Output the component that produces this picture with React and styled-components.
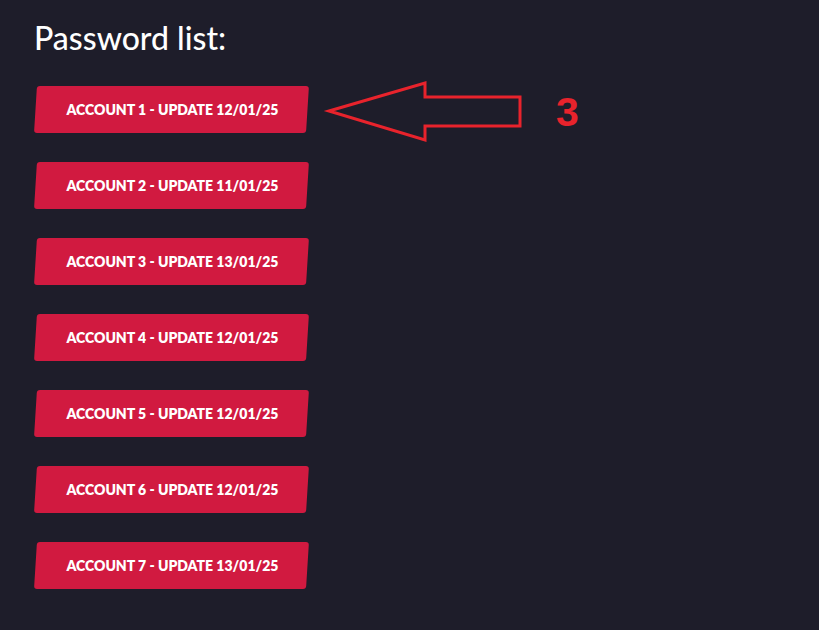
import React from "react";
import styled, { createGlobalStyle } from "styled-components";

const accounts = [
  { n: 1, date: "12/01/25" },
  { n: 2, date: "11/01/25" },
  { n: 3, date: "13/01/25" },
  { n: 4, date: "12/01/25" },
  { n: 5, date: "12/01/25" },
  { n: 6, date: "12/01/25" },
  { n: 7, date: "13/01/25" },
];

function App() {
  return (
    <>
      <GlobalStyle />
      <Page>
        <Title>Password list:</Title>
        <List>
          {accounts.map((a, i) => (
            <Row key={a.n}>
              <AccountButton>
                <span>
                  Account {a.n} - Update {a.date}
                </span>
              </AccountButton>
              {i === 0 && (
                <Callout>
                  <svg width="200" height="64" viewBox="0 0 200 64">
                    <polygon
                      points="3,33 99,5 99,19 194,19 194,48 99,48 99,62"
                      fill="none"
                      stroke="#e8232c"
                      strokeWidth="3"
                    />
                  </svg>
                  <Step>3</Step>
                </Callout>
              )}
            </Row>
          ))}
        </List>
      </Page>
    </>
  );
}

const GlobalStyle = createGlobalStyle`
  html, body {
    margin: 0;
    background: #1e1d2a;
  }
`;

const Page = styled.div`
  min-height: 630px;
  box-sizing: border-box;
  padding: 18px 34px;
  background: #1e1d2a;
  font-family: Lato, "Open Sans", sans-serif;
`;

const Title = styled.h1`
  margin: 0 0 28px;
  color: #ffffff;
  font-size: 32px;
  font-weight: 500;
  line-height: 40px;
`;

const List = styled.div`
  display: flex;
  flex-direction: column;
  gap: 29px;
`;

const Row = styled.div`
  display: flex;
  align-items: center;
  height: 47px;
`;

const AccountButton = styled.button`
  height: 47px;
  padding: 0 29px 0 31px;
  border: none;
  border-radius: 3px;
  background: #d11a40;
  transform: skewX(-3.6deg);
  transform-origin: bottom left;
  cursor: pointer;
  font-family: Lato, "Open Sans", sans-serif;

  span {
    display: block;
    transform: skewX(3.6deg);
    color: #ffffff;
    font-size: 14px;
    font-weight: 800;
    text-transform: uppercase;
    white-space: nowrap;
  }
`;

const Callout = styled.div`
  display: flex;
  align-items: center;
  margin-left: 20px;
  gap: 30px;

  svg {
    display: block;
    overflow: visible;
  }
`;

const Step = styled.span`
  margin-top: 6px;
  color: #e8232c;
  font-family: "Liberation Sans", Arial, sans-serif;
  font-size: 41px;
  font-weight: 700;
  line-height: 1;
`;

export default App;
